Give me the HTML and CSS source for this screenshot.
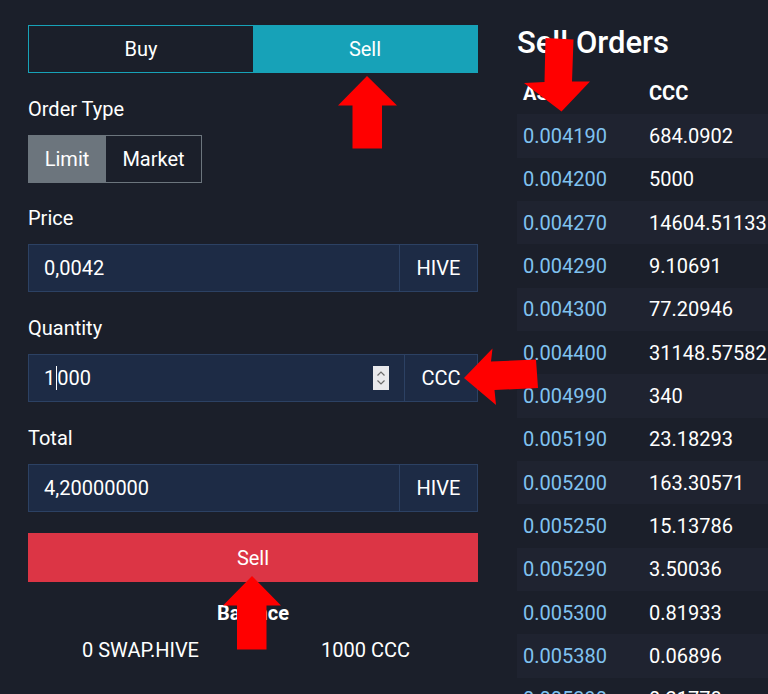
FILE: index.html
```html
<!DOCTYPE html>
<html lang="en">
<head>
<meta charset="utf-8">
<title>Sell CCC</title>
<link rel="stylesheet" href="styles.css">
</head>
<body>
<div class="page">
  <section class="order-form">
    <div class="side-toggle">
      <div class="side-btn">Buy</div>
      <div class="side-btn active">Sell</div>
    </div>

    <div class="label">Order Type</div>
    <div class="type-group">
      <div class="type-btn type-limit active">Limit</div>
      <div class="type-btn type-market">Market</div>
    </div>

    <div class="label">Price</div>
    <div class="input-group">
      <div class="field">0,0042</div>
      <div class="addon addon-hive">HIVE</div>
    </div>

    <div class="label">Quantity</div>
    <div class="input-group">
      <div class="field">1<span class="caret"></span>000
        <span class="spinner">
          <svg width="16" height="24" viewBox="0 0 16 24">
            <rect x="0" y="0" width="16" height="24" fill="#e9e9ec"/>
            <path d="M4.5 9.5 L8 6 L11.5 9.5" fill="none" stroke="#6b6b6b" stroke-width="1.2"/>
            <path d="M4.5 14.5 L8 18 L11.5 14.5" fill="none" stroke="#6b6b6b" stroke-width="1.2"/>
          </svg>
        </span>
      </div>
      <div class="addon addon-ccc">CCC</div>
    </div>

    <div class="label">Total</div>
    <div class="input-group">
      <div class="field">4,20000000</div>
      <div class="addon addon-hive">HIVE</div>
    </div>

    <div class="sell-btn">Sell</div>

    <div class="balance-title">Balance</div>
    <div class="balance-row">
      <div>0 SWAP.HIVE</div>
      <div>1000 CCC</div>
    </div>
  </section>

  <section class="orders">
    <h2 class="orders-title">Sell Orders</h2>
    <table class="orders-table">
      <thead>
        <tr><th class="col-ask">ASK</th><th>CCC</th></tr>
      </thead>
      <tbody>
        <tr><td class="price">0.004190</td><td>684.0902</td></tr>
        <tr><td class="price">0.004200</td><td>5000</td></tr>
        <tr><td class="price">0.004270</td><td>14604.51133</td></tr>
        <tr><td class="price">0.004290</td><td>9.10691</td></tr>
        <tr><td class="price">0.004300</td><td>77.20946</td></tr>
        <tr><td class="price">0.004400</td><td>31148.57582</td></tr>
        <tr><td class="price">0.004990</td><td>340</td></tr>
        <tr><td class="price">0.005190</td><td>23.18293</td></tr>
        <tr><td class="price">0.005200</td><td>163.30571</td></tr>
        <tr><td class="price">0.005250</td><td>15.13786</td></tr>
        <tr><td class="price">0.005290</td><td>3.50036</td></tr>
        <tr><td class="price">0.005300</td><td>0.81933</td></tr>
        <tr><td class="price">0.005380</td><td>0.06896</td></tr>
        <tr><td class="price">0.005390</td><td>0.21778</td></tr>
      </tbody>
    </table>
  </section>
</div>

<svg class="annotations" width="768" height="694" viewBox="0 0 768 694" aria-hidden="true">
  <polygon points="367,76 338,105.5 352.5,105.5 352.5,148.5 382,148.5 382,105.5 397,105.5" fill="#ff0000"/>
  <polygon points="545.5,38 573.5,39.5 572,81.5 590,81.5 561.5,111.5 524,83 544.5,82" fill="#ff0000"/>
  <polygon points="464,378 492.5,348.5 491,361.5 536,359.5 538,388 494.5,390 496,405" fill="#ff0000"/>
  <polygon points="252,576 223,605.5 237,605.5 237,649.5 266.5,649.5 266.5,605.5 281,605.5" fill="#ff0000"/>
</svg>
</body>
</html>
```

FILE: styles.css
```css
html, body {
  margin: 0;
  padding: 0;
}

body {
  width: 768px;
  height: 694px;
  overflow: hidden;
  position: relative;
  background: #1b1f2a;
  color: #ffffff;
  font-family: Roboto, "Liberation Sans", Arial, sans-serif;
  font-size: 20px;
  line-height: 30px;
}

.page {
  display: grid;
  grid-template-columns: 450px 251px;
  column-gap: 39px;
  padding: 25px 0 0 28px;
}

/* ---------- left form ---------- */
.side-toggle {
  display: flex;
  height: 48px;
  box-sizing: border-box;
  border: 1px solid #17a2b8;
  margin-bottom: 21px;
}

.side-btn {
  flex: 1;
  display: flex;
  align-items: center;
  justify-content: center;
  color: #ffffff;
}

.side-btn.active {
  background: #17a2b8;
}

.label {
  line-height: 30px;
  margin-bottom: 11px;
}

.type-group {
  display: flex;
  width: max-content;
  height: 48px;
  margin-bottom: 20px;
}

.type-btn {
  display: flex;
  align-items: center;
  justify-content: center;
  box-sizing: border-box;
  border: 1px solid #6c757d;
}

.type-limit {
  width: 78px;
}

.type-market {
  width: 96px;
  border-left: none;
}

.type-btn.active {
  background: #6c757d;
}

.input-group {
  display: flex;
  height: 48px;
  box-sizing: border-box;
  border: 1px solid #2c4163;
  background: #1d2b45;
  margin-bottom: 21px;
}

.field {
  flex: 1;
  display: flex;
  align-items: center;
  padding: 0 15px;
}

.caret {
  display: inline-block;
  width: 1px;
  height: 24px;
  background: #ffffff;
  margin: 0 0.5px;
}

.spinner {
  margin-left: auto;
  display: flex;
  height: 24px;
}

.addon {
  display: flex;
  align-items: center;
  justify-content: center;
  border-left: 1px solid #2c4163;
  box-sizing: border-box;
}

.addon-hive {
  width: 78px;
}

.addon-ccc {
  width: 73px;
}

.sell-btn {
  height: 49px;
  display: flex;
  align-items: center;
  justify-content: center;
  background: #dc3545;
  color: #ffffff;
  margin-bottom: 19px;
}

.balance-title {
  text-align: center;
  font-weight: 700;
  line-height: 24px;
  margin-bottom: 10px;
}

.balance-row {
  display: grid;
  grid-template-columns: 1fr 1fr;
  text-align: center;
}

/* ---------- right orders ---------- */
.orders {
  overflow: hidden;
}

.orders-title {
  margin: 0 0 10px;
  font-size: 31px;
  line-height: 36px;
  font-weight: 500;
  white-space: nowrap;
}

.orders-table {
  border-collapse: collapse;
  width: 251px;
  table-layout: fixed;
  font-size: 20px;
  line-height: 30px;
}

.orders-table th,
.orders-table td {
  text-align: left;
  padding: 0 6px;
  height: 43.33px;
  white-space: nowrap;
  overflow: visible;
}

.orders-table th {
  font-weight: 700;
}

.orders-table .col-ask {
  width: 114px;
}

.orders-table tbody tr:nth-child(odd) {
  background: #1f2330;
}

.orders-table .price {
  color: #80c2f0;
}

/* ---------- annotation overlay ---------- */
.annotations {
  position: absolute;
  left: 0;
  top: 0;
  pointer-events: none;
}
```
